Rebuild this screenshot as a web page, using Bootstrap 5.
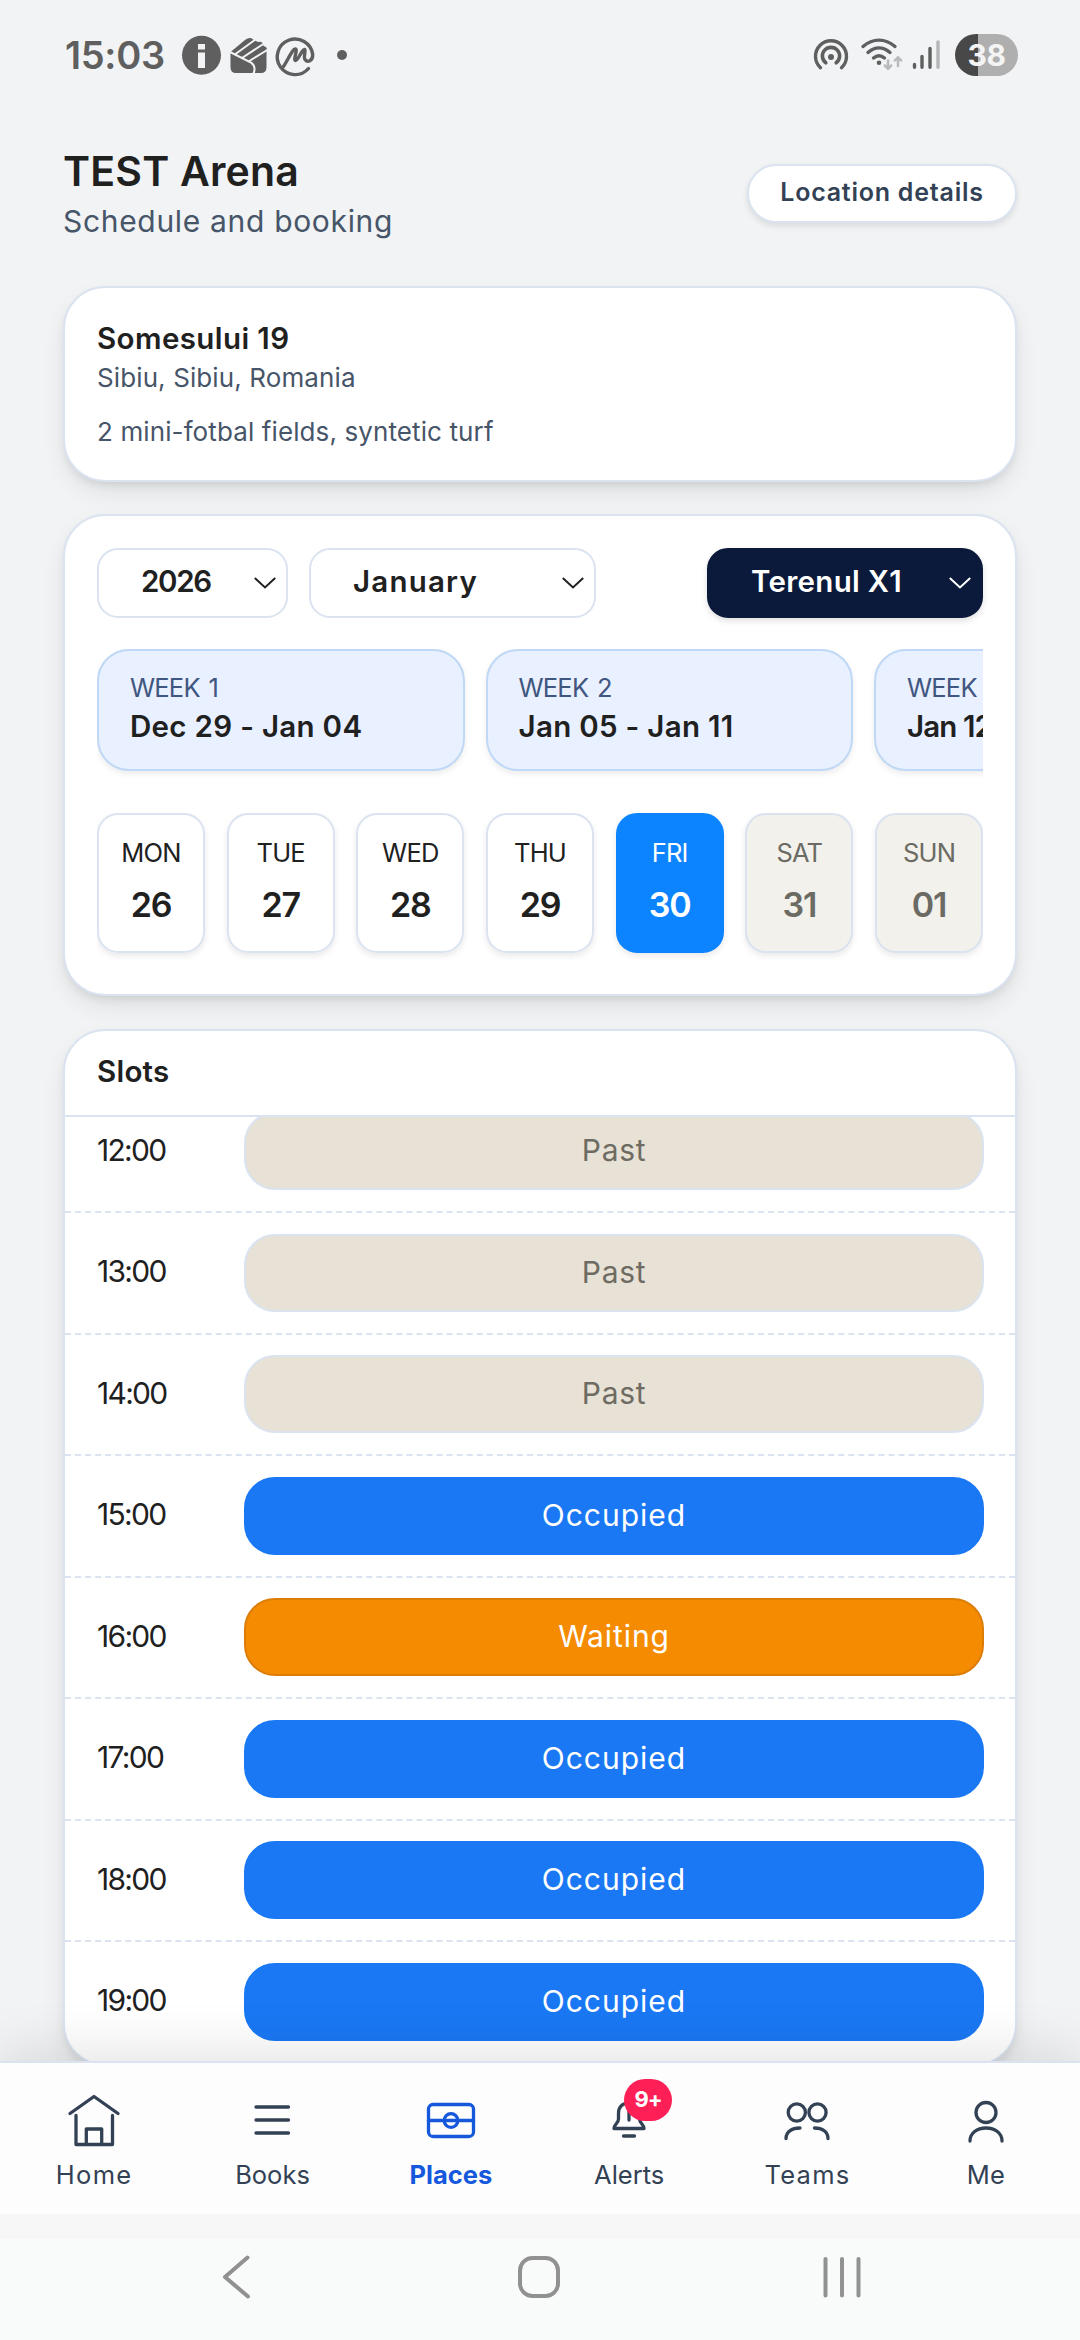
<!DOCTYPE html>
<html lang="en">
<head>
<meta charset="utf-8">
<meta name="viewport" content="width=device-width, initial-scale=1">
<title>TEST Arena</title>
<link href="https://cdn.jsdelivr.net/npm/bootstrap@5.3.0/dist/css/bootstrap.min.css" rel="stylesheet">
<style>
:root{--line:#dae3ef;--ink:#20211f;--slate:#475569;--navy:#334155}
html,body{height:2340px;overflow:hidden}
body{font-family:Inter,"Open Sans",sans-serif;background:#f1f3f5;color:var(--ink);width:1080px;margin:0}
.screen{height:2061px;overflow:hidden;padding:0 63px}
.statusbar{height:110px;margin:0 -63px;padding:0 62px 0 65px;color:#5f5f5f}
.clock{font-size:38px;font-weight:600;letter-spacing:-.3px;line-height:50px}
.battery{width:63px;height:42px;border-radius:21px;background:linear-gradient(90deg,#484848 23px,#afafb0 23px);color:#f4f4f5;font-size:30px;font-weight:700;line-height:42px;letter-spacing:-.5px}
.pagehead{height:102px;margin-top:31px;margin-bottom:43px}
.pagehead h1{font-size:41px;font-weight:600;letter-spacing:.2px;line-height:58px;margin:0}
.pagehead p{font-size:30px;letter-spacing:.68px;line-height:43px;color:var(--slate);margin:0}
.btn-location{width:270px;height:59px;border:2px solid var(--line);border-radius:30px;background:#fff;color:var(--navy);font-size:25px;font-weight:600;letter-spacing:.77px;line-height:53px;padding:0 0 1px;margin-top:2px;box-shadow:0 3px 6px rgba(0,0,0,.1)}
.panel{background:#fff;border:2px solid var(--line);border-radius:42px;box-shadow:0 11px 26px -3px rgba(0,0,0,.09),0 5px 11px -4px rgba(0,0,0,.12)}
.address{height:196px;padding:28px 32px 0;margin-bottom:32px;color:var(--slate);font-size:26px;letter-spacing:.11px}
.address-name{line-height:44px;letter-spacing:.4px}
.address-city{line-height:36px}
.address-note{line-height:36px;margin-top:18px}
.strong-line{font-size:29.5px;font-weight:600;color:var(--ink);white-space:nowrap}
.planner{height:482px;padding:32px 32px 0;margin-bottom:33px}
.picker{height:70px;border:2px solid var(--line);border-radius:21px;padding:0 10px 3px 42px;background:#fff;font-size:29.5px;font-weight:600;color:var(--ink)}
.picker svg{position:relative;top:1.5px}
.picker-year{width:191px;letter-spacing:-1.3px}
.picker-month{width:287px;margin-left:21px;letter-spacing:1.2px}
.picker-field{width:276px;background:#0b1a3a;border-color:#0b1a3a;color:#fff;letter-spacing:.3px;box-shadow:0 3px 6px rgba(0,0,0,.12)}
.weeks{gap:21px;margin-top:31px;overflow:hidden;padding-bottom:12px}
.week{flex:0 0 367.5px;height:122px;border:2px solid #bfd8f5;border-radius:32px;background:#e9f0ff;padding:19px 0 0 31px;box-shadow:0 3px 6px rgba(0,0,0,.08)}
.week div:first-child{font-size:25.5px;line-height:36px;letter-spacing:-.8px;word-spacing:2.5px;color:#3f5680}
.week .strong-line{line-height:40px;letter-spacing:.3px}
.week:last-child .strong-line{letter-spacing:-.9px}
.days{gap:21.6px;margin-top:30px;padding-bottom:12px;overflow:hidden}
.day{flex:1 1 0;height:140px;border:2px solid var(--line);border-radius:21px;padding-top:21px;box-shadow:0 3px 6px rgba(0,0,0,.09)}
.day div{font-size:25.5px;line-height:34px;letter-spacing:-.8px}
.day b{display:block;font-size:34px;font-weight:600;line-height:48px;margin-top:10.5px;letter-spacing:-1.2px}
.day.off{background:#f2f1ec;color:#6b6b64}
.day.on{background:#0d84ff;border-color:#0d84ff;color:#fff}
.slots{height:1037px}
.slots-head{height:86px;padding:18px 32px 0;line-height:44px;letter-spacing:.24px;border-bottom:2px solid var(--line)}
.slots-body{overflow:hidden}
.slots-body>div:first-child{margin-top:-25.5px}
.slot{height:121.5px;border-bottom:2px dashed var(--line);padding:0 31px 0 32px;font-size:30px}
.slot:last-child{border-color:transparent}
.slot time{width:147px;letter-spacing:-1.7px;padding-bottom:2px}
.pill{height:78px;border:2px solid var(--line);border-radius:31px;line-height:72px;background:#e7e1d6;color:#6e6b62;letter-spacing:.7px}
.pill.busy{background:#1a78f4;border-color:#1a78f4;color:#fff;letter-spacing:1px}
.pill.wait{background:#f58b00;border-color:#dc7d08;color:#fff;letter-spacing:.9px}
.tabs{height:153px;position:relative;z-index:2;background:#fdfdfe;border-top:2px solid var(--line);padding:29px 5px 0;box-shadow:0 -12px 52px rgba(0,0,0,.1);color:var(--navy);font-size:25.5px}
.tab svg{display:block;margin:0 auto 10px;fill:none;stroke:currentColor;stroke-width:3.3;stroke-linecap:round;stroke-linejoin:round}
.tab div{line-height:34px}
.tab .spaced{letter-spacing:1.3px}
.tab.current{color:#1558dc;font-weight:700}
.count{position:absolute;left:84px;top:-13px;width:48px;height:42px;border-radius:21px;background:#ff1f57;color:#fff;font-size:22px;font-weight:700;line-height:40px;letter-spacing:-1px;text-align:center}
.sysbar{height:126px;position:relative;z-index:3;background:linear-gradient(#f7f7f8 25px,#f9fafa 25px);padding:0 87px 0 85px}
.sysbar svg{fill:none;stroke:#919191;stroke-width:4;stroke-linecap:round;stroke-linejoin:round}
</style>
</head>
<body>
<div class="screen">
  <div class="statusbar d-flex align-items-center justify-content-between">
    <div class="d-flex align-items-center">
      <span class="clock">15:03</span>
      <svg class="ms-3" width="170" height="44" viewBox="180 33 170 44" fill="none" stroke="#5f5f5f">
        <circle cx="200.500" cy="55.300" r="19.500" fill="#5f5f5f" stroke="none"/>
        <path d="M197 44h7v5.500h-7zM197 52.500h7V68h-7z" fill="#f1f3f5" stroke="none"/>
        <path d="M229.500 52 L244 40 Q249 36.500 252 39.500 L257 42 Q262 41 262.500 46 Q267 47 265.500 51 V67 Q265.500 73 260 73 H235 Q229.500 73 229.500 67z" fill="#5f5f5f" stroke="none"/>
        <path d="M228 51.500 L250 62.500 Q256 67 252 74.500 M234.500 54 L254.500 39.500 M241 58 L263 43.500 M247.500 61.500 L267 49.500" stroke="#f1f3f5" stroke-width="2"/>
        <path d="M307.500 68.500 A17.800 17.800 0 1 1 311.700 54.500 C312 61 306.500 63 304 59.500 C302 56 305.500 50 303.500 49.500 C301 49 297 61 294.500 60.500 C292 60 297 49.500 294.500 49 C291.500 48.500 287 60 282.500 66.500" stroke-width="3.400" stroke-linecap="round"/>
        <circle cx="341" cy="55" r="5" fill="#5f5f5f" stroke="none"/>
      </svg>
    </div>
    <div class="d-flex align-items-center">
      <svg width="142" height="44" viewBox="813 33 142 44" fill="none" stroke="#5f5f5f" stroke-width="3.400" stroke-linecap="round">
        <path d="M820.500 67.700 A15.500 15.500 0 1 1 841.500 67.700"/>
        <path d="M825.800 62.800 A8.600 8.600 0 1 1 836.200 62.800" stroke-width="3.600"/>
        <circle cx="831" cy="57" r="3" fill="#5f5f5f" stroke="none"/>
        <path d="M863 46.500 C873 38 885 38 895 46.500 M868 52.500 C875 46.500 883 46.500 890 52.500 M873.500 58 C877 55 881 55 884.500 58"/>
        <circle cx="879" cy="62.700" r="2.300" fill="#5f5f5f" stroke="none"/>
        <path d="M888 60.500V68.500M884.800 65.500L888 68.700L891.200 65.500M898 66V57.500M894.800 60.500L898 57.200L901.200 60.500" stroke="#b9babb" stroke-width="2.500"/>
        <path d="M914.500 64.500V67.300M922 56.500V67.300M930 48.500V67.300"/>
        <path d="M938 42V67.300" stroke="#b5b6b7"/>
      </svg>
      <div class="battery text-center">38</div>
    </div>
  </div>

  <header class="pagehead d-flex align-items-center justify-content-between">
    <div>
      <h1>TEST Arena</h1>
      <p>Schedule and booking</p>
    </div>
    <button class="btn btn-location">Location details</button>
  </header>

  <section class="panel address">
    <div class="strong-line address-name">Somesului 19</div>
    <div class="address-city">Sibiu, Sibiu, Romania</div>
    <div class="address-note">2 mini-fotbal fields, syntetic turf</div>
  </section>

  <section class="panel planner">
    <div class="d-flex">
      <div class="picker picker-year d-flex align-items-center justify-content-between">2026
        <svg width="22" height="12" viewBox="0 0 22 12" fill="none" stroke="currentColor" stroke-width="2"><path d="M.8 1L11 10.500L21.200 1"/></svg></div>
      <div class="picker picker-month d-flex align-items-center justify-content-between">January
        <svg width="22" height="12" viewBox="0 0 22 12" fill="none" stroke="currentColor" stroke-width="2"><path d="M.8 1L11 10.500L21.200 1"/></svg></div>
      <div class="picker picker-field d-flex align-items-center justify-content-between ms-auto">Terenul X1
        <svg width="22" height="12" viewBox="0 0 22 12" fill="none" stroke="currentColor" stroke-width="2"><path d="M.8 1L11 10.500L21.200 1"/></svg></div>
    </div>
    <div class="weeks d-flex">
      <div class="week"><div>WEEK 1</div><div class="strong-line">Dec 29 - Jan 04</div></div>
      <div class="week"><div>WEEK 2</div><div class="strong-line">Jan 05 - Jan 11</div></div>
      <div class="week"><div>WEEK 3</div><div class="strong-line">Jan 12 - Jan 18</div></div>
    </div>
    <div class="days d-flex text-center">
      <div class="day"><div>MON</div><b>26</b></div>
      <div class="day"><div>TUE</div><b>27</b></div>
      <div class="day"><div>WED</div><b>28</b></div>
      <div class="day"><div>THU</div><b>29</b></div>
      <div class="day on"><div>FRI</div><b>30</b></div>
      <div class="day off"><div>SAT</div><b>31</b></div>
      <div class="day off"><div>SUN</div><b>01</b></div>
    </div>
  </section>

  <section class="panel slots">
    <div class="slots-head strong-line">Slots</div>
    <div class="slots-body">
      <div class="slot d-flex align-items-center"><time>12:00</time><div class="pill flex-fill text-center">Past</div></div>
      <div class="slot d-flex align-items-center"><time>13:00</time><div class="pill flex-fill text-center">Past</div></div>
      <div class="slot d-flex align-items-center"><time>14:00</time><div class="pill flex-fill text-center">Past</div></div>
      <div class="slot d-flex align-items-center"><time>15:00</time><div class="pill busy flex-fill text-center">Occupied</div></div>
      <div class="slot d-flex align-items-center"><time>16:00</time><div class="pill wait flex-fill text-center">Waiting</div></div>
      <div class="slot d-flex align-items-center"><time>17:00</time><div class="pill busy flex-fill text-center">Occupied</div></div>
      <div class="slot d-flex align-items-center"><time>18:00</time><div class="pill busy flex-fill text-center">Occupied</div></div>
      <div class="slot d-flex align-items-center"><time>19:00</time><div class="pill busy flex-fill text-center">Occupied</div></div>
    </div>
  </section>
</div>

<nav class="tabs d-flex text-center">
  <div class="tab col"><svg width="56" height="56" viewBox="0 0 56 56"><path d="M4 21.500L28 4.500L52 21.500M10 23.500V52.500H46.500V23.500M20.300 52V37H35.700V52"/></svg><div class="spaced">Home</div></div>
  <div class="tab col"><svg width="56" height="56" viewBox="0 0 56 56"><path d="M12 15H44.500M12 28H44.500M12 41H44.500"/></svg><div>Books</div></div>
  <div class="tab col current"><svg width="56" height="56" viewBox="0 0 56 56"><rect x="5.500" y="12.500" width="45" height="32" rx="4.500"/><circle cx="28" cy="28.500" r="6.800"/><path d="M5.500 28.500H50.500"/></svg><div>Places</div></div>
  <div class="tab col position-relative"><svg width="56" height="56" viewBox="0 0 56 56"><path d="M28 11C21 11 17.500 15.500 17.500 21.500V27C17.500 31 13 32.500 13 36.500H43C43 32.500 38.500 31 38.500 27V21.500C38.500 15.500 35 11 28 11ZM28 15V28M22.500 44H33.500"/></svg><span class="count">9+</span><div>Alerts</div></div>
  <div class="tab col"><svg width="56" height="56" viewBox="0 0 56 56"><circle cx="17.800" cy="20.500" r="8.600"/><circle cx="38.500" cy="20.500" r="8.600"/><path d="M7 46.500C7 40 12.500 36 21 36M49 46.500C49 40 43.500 36 35.500 36"/></svg><div class="spaced">Teams</div></div>
  <div class="tab col"><svg width="56" height="56" viewBox="0 0 56 56"><circle cx="28" cy="20.500" r="10"/><path d="M12 49C12 41 19 36 28 36C37 36 44 41 44 49"/></svg><div>Me</div></div>
</nav>

<div class="sysbar d-flex align-items-center text-center">
  <div class="col"><svg width="46" height="46" viewBox="0 0 46 46"><path d="M34.500 3.500L12 23L35 42.500"/></svg></div>
  <div class="col"><svg width="46" height="46" viewBox="0 0 46 46"><rect x="4" y="4" width="38" height="38" rx="12.500"/></svg></div>
  <div class="col"><svg width="46" height="46" viewBox="0 0 46 46"><path d="M6.500 5V41.500M23 5V41.500M39.500 5V41.500"/></svg></div>
</div>
<script src="https://cdn.jsdelivr.net/npm/bootstrap@5.3.0/dist/js/bootstrap.bundle.min.js"></script>
</body>
</html>
